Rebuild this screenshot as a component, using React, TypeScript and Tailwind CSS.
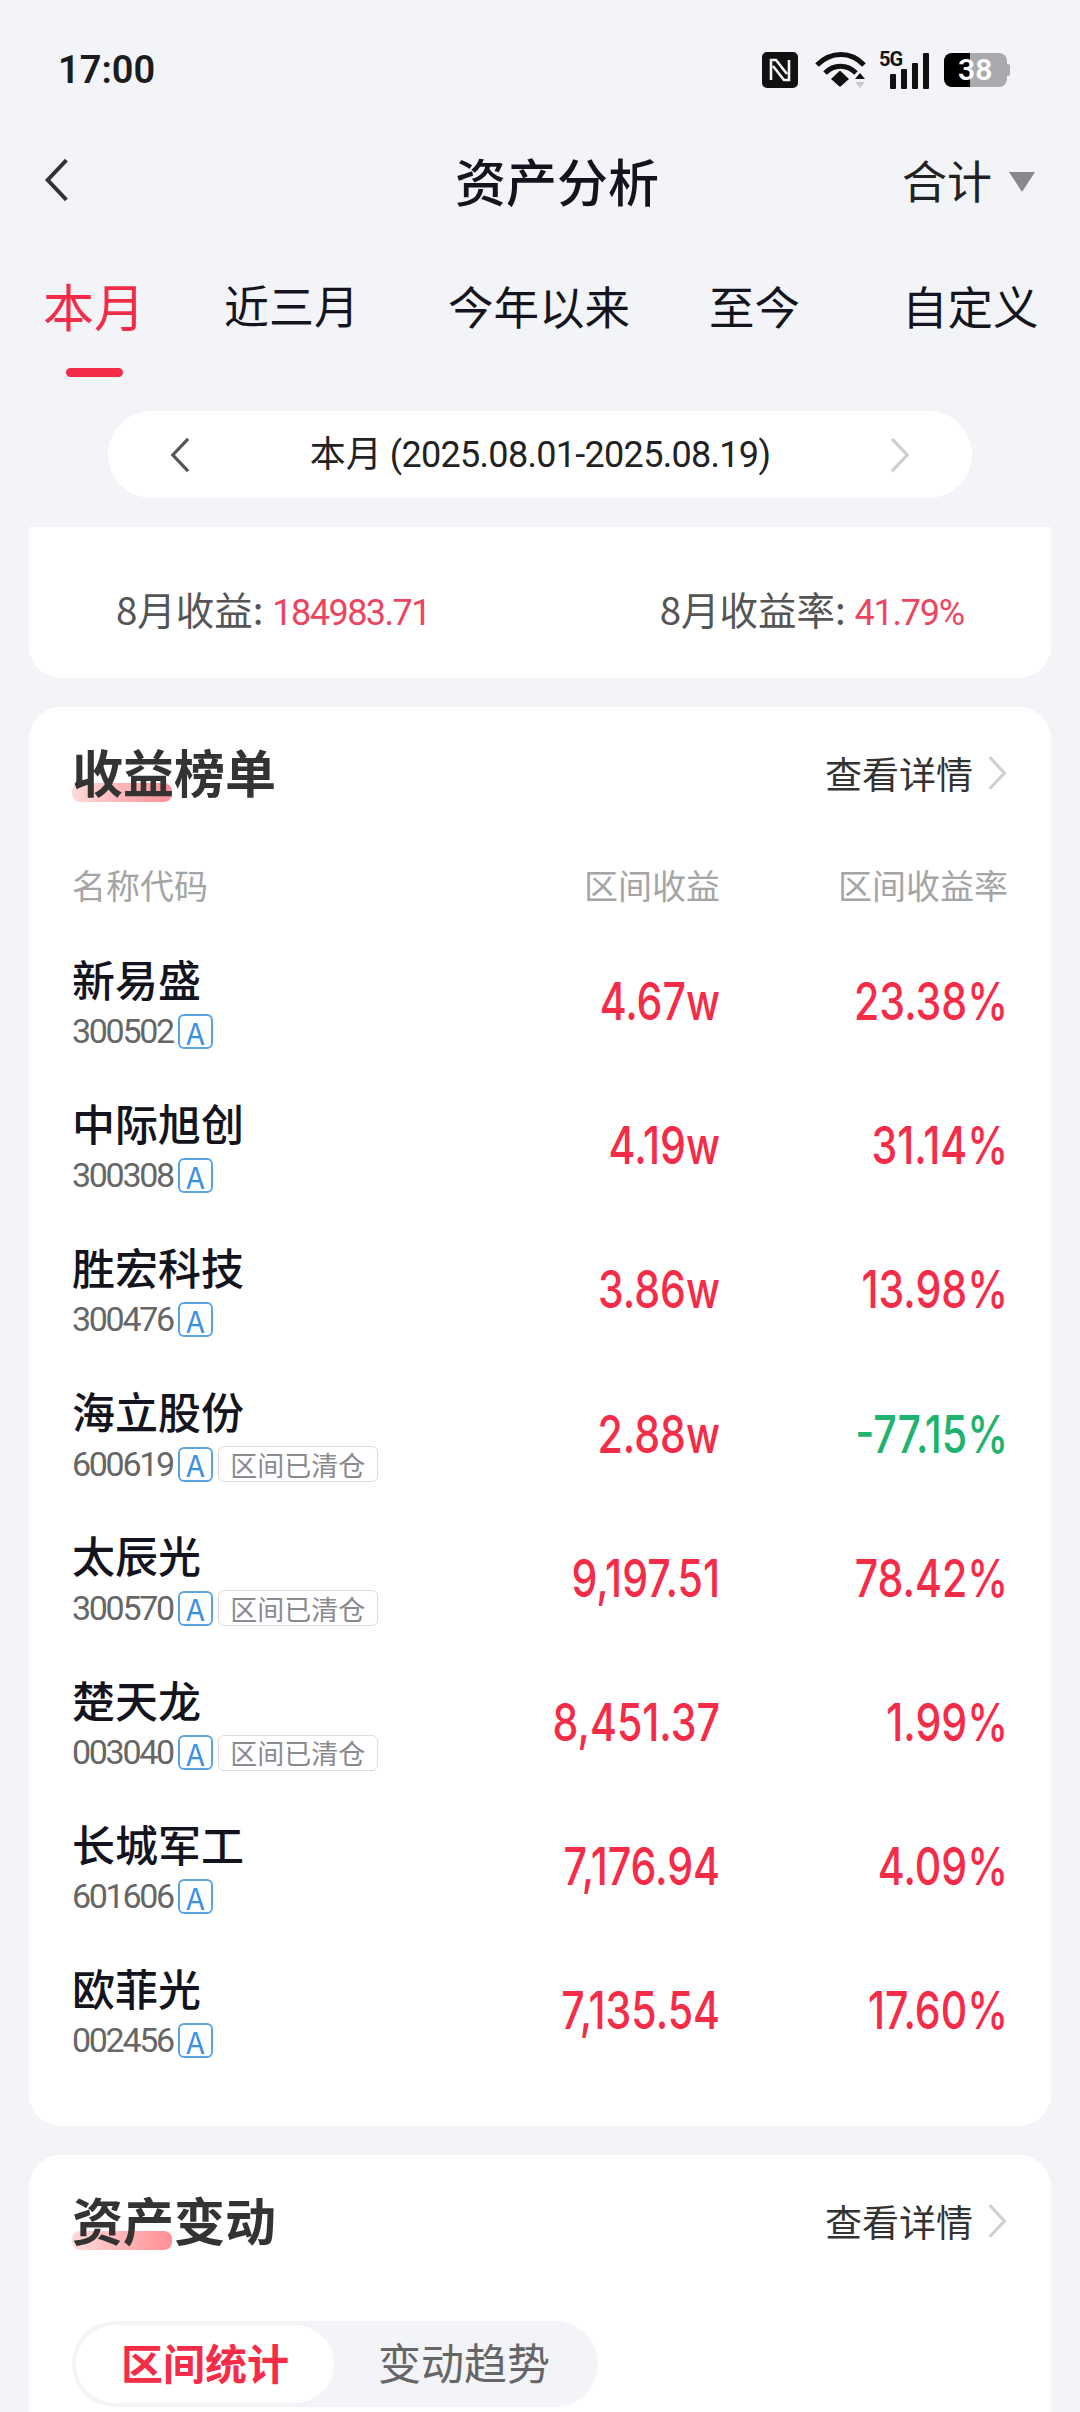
import React from "react";

// =======================
// DATA
// =======================
interface Holding {
  name: string;
  code: string;
  profit: string;
  rate: string;
  cleared?: boolean;
  down?: boolean;
}

const holdings: Holding[] = [
  { name: "新易盛", code: "300502", profit: "4.67w", rate: "23.38%" },
  { name: "中际旭创", code: "300308", profit: "4.19w", rate: "31.14%" },
  { name: "胜宏科技", code: "300476", profit: "3.86w", rate: "13.98%" },
  { name: "海立股份", code: "600619", profit: "2.88w", rate: "-77.15%", cleared: true, down: true },
  { name: "太辰光", code: "300570", profit: "9,197.51", rate: "78.42%", cleared: true },
  { name: "楚天龙", code: "003040", profit: "8,451.37", rate: "1.99%", cleared: true },
  { name: "长城军工", code: "601606", profit: "7,176.94", rate: "4.09%" },
  { name: "欧菲光", code: "002456", profit: "7,135.54", rate: "17.60%" },
];

const num = "font-['Roboto',sans-serif]";
const bigNum = "font-['Inter',sans-serif] origin-right scale-x-[0.79] text-right text-[52px] leading-[60px] font-medium";

// =======================
// ICONS
// =======================
function Chevron({ dir, className }: { dir: "left" | "right"; className: string }) {
  return (
    <svg viewBox="0 0 24 40" fill="none" className={className}>
      <polyline
        points={dir === "left" ? "21,2 4,20 21,38" : "3,2 20,20 3,38"}
        stroke="currentColor"
        strokeWidth="3.6"
        strokeLinejoin="miter"
      />
    </svg>
  );
}

function StatusIcons() {
  return (
    <div className="flex items-center">
      {/* nfc */}
      <svg viewBox="0 0 36 36" className="w-[36px] h-[36px]">
        <rect width="36" height="36" rx="5" fill="#111" />
        <path d="M9 28V8h5l11 14M27 8v20h-5L11 14" fill="none" stroke="#f3f4f8" strokeWidth="2.6" />
      </svg>
      {/* wifi */}
      <svg viewBox="0 0 52 36" className="w-[52px] h-[36px] ml-[17px]">
        <path d="M2 13C16 -1 36 -1 49 13" fill="none" stroke="#111" strokeWidth="5" />
        <path d="M10 21C19 12 32 12 41 21" fill="none" stroke="#111" strokeWidth="5" />
        <path d="M16 27L25 18.500L34 27L25 35Z" fill="#111" />
        <path d="M40 27L45 21L50 27Z" fill="#111" />
        <path d="M40 30L45 36L50 30Z" fill="#c9c9cc" />
      </svg>
      {/* signal */}
      <div className="relative w-[50px] h-[38px] ml-[12px]">
        <span className={`absolute left-0 top-[-3px] text-[20px] leading-[22px] font-bold tracking-[-1px] text-[#111] ${num}`}>5G</span>
        <div className="absolute left-[11px] bottom-0 flex items-end gap-[5px]">
          <div className="w-[6px] h-[15px] bg-[#111] rounded-[1px]" />
          <div className="w-[6px] h-[20px] bg-[#111] rounded-[1px]" />
          <div className="w-[6px] h-[26px] bg-[#111] rounded-[1px]" />
          <div className="w-[6px] h-[36px] bg-[#111] rounded-[1px]" />
        </div>
      </div>
      {/* battery */}
      <div className="relative flex w-[63px] h-[34px] ml-[15px] rounded-[8px] bg-[#aaaaae]">
        <div className="w-[26px] bg-black rounded-l-[8px]" />
        <span className={`absolute left-[14px] top-0 text-[30px] leading-[34px] font-semibold text-white ${num}`}>38</span>
      </div>
      <div className="w-[3px] h-[12px] bg-[#aaaaae] rounded-r-[2px]" />
    </div>
  );
}

// =======================
// PARTS
// =======================
function CardTitle({ title, mark }: { title: string; mark: string }) {
  return (
    <div className="flex items-center justify-between">
      <div className="relative isolate">
        <div className={`absolute left-0 top-[41px] h-[19px] rounded-[8px] -z-10 bg-gradient-to-r from-[#ffdada] to-[#ff8f96] ${mark}`} />
        <h2 className="text-[51px] leading-[58px] font-bold text-[#333]">{title}</h2>
      </div>
      <div className="flex items-center pt-[3px]">
        <span className="text-[37px] leading-[48px] text-[#333]">查看详情</span>
        <Chevron dir="right" className="w-[21px] h-[36px] ml-[14px] text-[#cfcfcf]" />
      </div>
    </div>
  );
}

function Row({ item }: { item: Holding }) {
  return (
    <div className="grid grid-cols-[1fr_220px_288px] items-center h-[144.200px]">
      <div className="pb-[5px]">
        <p className="text-[43px] leading-[56px] font-medium text-[#14141e]">{item.name}</p>
        <div className="flex items-center h-[36px] mt-[8px]">
          <span className={`text-[34px] tracking-[-2.300px] text-[#666] ${num}`}>{item.code}</span>
          <span className="flex items-center justify-center w-[35px] h-[35px] ml-[5px] rounded-[6px] border-2 border-[#5aa5df] text-[30px] leading-none text-[#3a92e0]">
            A
          </span>
          {item.cleared && (
            <span className="flex items-center justify-center w-[160px] h-[36px] ml-[5px] rounded-[6px] border border-[#dcdcdf] text-[27px] leading-none text-[#8a8a90]">
              区间已清仓
            </span>
          )}
        </div>
      </div>
      <p className={`text-[#f42c48] ${bigNum}`}>{item.profit}</p>
      <p className={`${bigNum} ${item.down ? "text-[#1fb36f]" : "text-[#f42c48]"}`}>{item.rate}</p>
    </div>
  );
}

// =======================
// MAIN COMPONENT
// =======================
export default function App() {
  return (
    <div className="w-[1080px] h-[2412px] overflow-hidden bg-[#f3f4f8] font-['Noto_Sans_CJK_SC',sans-serif]">
      {/* status bar */}
      <div className="flex items-center justify-between h-[38px] mt-[51px] pl-[58px] pr-[70px]">
        <span className={`text-[38px] leading-[38px] font-semibold text-[#1c1c1c] ${num}`}>17:00</span>
        <StatusIcons />
      </div>

      {/* nav */}
      <div className="flex items-center h-[60px] mt-[61px] pl-[43px]">
        <Chevron dir="left" className="w-[27px] h-[44px] text-[#333]" />
        <h1 className="ml-[385px] text-[51px] leading-[60px] font-medium text-[#14141e]">资产分析</h1>
        <span className="ml-[243px] text-[45px] leading-[60px] text-[#222]">合计</span>
        <div className="ml-[17px] mt-[3px] w-0 h-0 border-x-[13px] border-x-transparent border-t-[20px] border-t-[#88888e]" />
      </div>

      {/* tabs */}
      <div className="flex items-center h-[60px] mt-[65px] pl-[43px]">
        <span className="text-[51px] leading-[60px] text-[#f42c48]">本月</span>
        <span className="ml-[79px] text-[45px] leading-[60px] text-[#14141e]">近三月</span>
        <span className="ml-[89px] text-[45.500px] leading-[60px] text-[#14141e]">今年以来</span>
        <span className="ml-[79px] text-[45.500px] leading-[60px] text-[#14141e]">至今</span>
        <span className="ml-[102px] text-[45.500px] leading-[60px] text-[#14141e]">自定义</span>
      </div>
      <div className="w-[57px] h-[9px] mt-[33px] ml-[66px] rounded-full bg-[#f42c48]" />

      {/* date range */}
      <div className="flex items-center justify-between w-[864px] h-[87px] mt-[34px] mx-auto px-[61px] rounded-full bg-white">
        <Chevron dir="left" className="w-[22px] h-[36px] text-[#55555c]" />
        <span className="pb-[3px] text-[36px] leading-[48px] text-[#222]">
          本月 <span className={`tracking-[-0.700px] ${num}`}>(2025.08.01-2025.08.19)</span>
        </span>
        <Chevron dir="right" className="w-[22px] h-[36px] text-[#cfcfcf]" />
      </div>

      {/* summary */}
      <div className="flex items-center justify-between h-[151px] mx-[29px] mt-[29px] pt-[15px] pl-[87px] pr-[87px] rounded-b-[32px] bg-white text-[38.500px] text-[#555]">
        <p>
          8月收益: <span className={`text-[36px] tracking-[-1.500px] text-[#ea4660] ${num}`}>184983.71</span>
        </p>
        <p>
          8月收益率: <span className={`text-[36px] tracking-[-1.200px] text-[#ea4660] ${num}`}>41.79%</span>
        </p>
      </div>

      {/* ranking */}
      <section className="h-[1419px] mx-[29px] mt-[29px] pt-[35px] px-[43px] rounded-[32px] bg-white">
        <CardTitle title="收益榜单" mark="w-[100px]" />
        <div className="grid grid-cols-[1fr_220px_288px] mt-[60px] text-[34px] leading-[50px] text-[#a5a5a5]">
          <span>名称代码</span>
          <span className="text-right">区间收益</span>
          <span className="text-right">区间收益率</span>
        </div>
        <div className="mt-[20px]">
          {holdings.map((item) => (
            <Row key={item.code} item={item} />
          ))}
        </div>
      </section>

      {/* asset change */}
      <section className="mx-[29px] mt-[29px] pt-[35px] px-[43px] pb-[40px] rounded-[32px] bg-white">
        <CardTitle title="资产变动" mark="w-[100px]" />
        <div className="flex w-[526px] h-[86px] mt-[73px] p-[4px] rounded-full bg-[#f3f4f8]">
          <div className="flex items-center justify-center w-[258px] pb-[5px] rounded-full bg-white text-[42px] font-bold text-[#f42c48]">区间统计</div>
          <div className="flex flex-1 items-center justify-center pb-[5px] text-[43px] text-[#666]">变动趋势</div>
        </div>
      </section>
    </div>
  );
}
